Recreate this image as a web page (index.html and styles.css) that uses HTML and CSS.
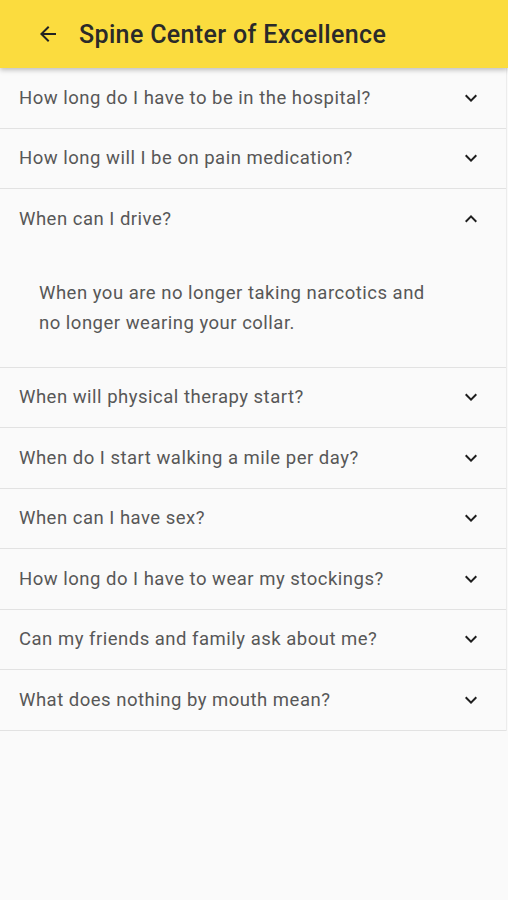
FILE: index.html
```html
<!DOCTYPE html>
<html lang="en">
<head>
  <meta charset="UTF-8" />
  <title>Spine Center of Excellence</title>
  <link rel="stylesheet" href="styles.css">
</head>
<body>
  <header class="appbar">
    <svg class="back" viewBox="0 0 24 24" width="24" height="24">
      <path d="M20 11H7.83l5.59-5.59L12 4l-8 8 8 8 1.41-1.41L7.83 13H20v-2z" fill="#222"/>
    </svg>
    <h1>Spine Center of Excellence</h1>
  </header>

  <div class="faq">
    <div class="item">
      <div class="question"><span>How long do I have to be in the hospital?</span><svg class="chev" viewBox="0 0 24 24"><path d="M7.41 8.59 12 13.17l4.59-4.58L18 10l-6 6-6-6z"/></svg></div>
    </div>
    <div class="item">
      <div class="question"><span>How long will I be on pain medication?</span><svg class="chev" viewBox="0 0 24 24"><path d="M7.41 8.59 12 13.17l4.59-4.58L18 10l-6 6-6-6z"/></svg></div>
    </div>
    <div class="item open">
      <div class="question"><span>When can I drive?</span><svg class="chev" viewBox="0 0 24 24"><path d="M7.41 15.41 12 10.83l4.59 4.58L18 14l-6-6-6 6z"/></svg></div>
      <p class="answer">When you are no longer taking narcotics and no longer wearing your collar.</p>
    </div>
    <div class="item">
      <div class="question"><span>When will physical therapy start?</span><svg class="chev" viewBox="0 0 24 24"><path d="M7.41 8.59 12 13.17l4.59-4.58L18 10l-6 6-6-6z"/></svg></div>
    </div>
    <div class="item">
      <div class="question"><span>When do I start walking a mile per day?</span><svg class="chev" viewBox="0 0 24 24"><path d="M7.41 8.59 12 13.17l4.59-4.58L18 10l-6 6-6-6z"/></svg></div>
    </div>
    <div class="item">
      <div class="question"><span>When can I have sex?</span><svg class="chev" viewBox="0 0 24 24"><path d="M7.41 8.59 12 13.17l4.59-4.58L18 10l-6 6-6-6z"/></svg></div>
    </div>
    <div class="item">
      <div class="question"><span>How long do I have to wear my stockings?</span><svg class="chev" viewBox="0 0 24 24"><path d="M7.41 8.59 12 13.17l4.59-4.58L18 10l-6 6-6-6z"/></svg></div>
    </div>
    <div class="item">
      <div class="question"><span>Can my friends and family ask about me?</span><svg class="chev" viewBox="0 0 24 24"><path d="M7.41 8.59 12 13.17l4.59-4.58L18 10l-6 6-6-6z"/></svg></div>
    </div>
    <div class="item">
      <div class="question"><span>What does nothing by mouth mean?</span><svg class="chev" viewBox="0 0 24 24"><path d="M7.41 8.59 12 13.17l4.59-4.58L18 10l-6 6-6-6z"/></svg></div>
    </div>
  </div>
</body>
</html>
```

FILE: styles.css
```css
body {
  margin: 0;
  background: #fafafa;
  font-family: Roboto, "Liberation Sans", sans-serif;
  height: 900px;
  overflow: hidden;
}
.appbar {
  height: 68px;
  background: #fbdc3e;
  display: flex;
  align-items: center;
  padding-left: 36px;
  box-shadow: 0 2px 5px rgba(0, 0, 0, 0.25);
  position: relative;
  z-index: 1;
}
.back {
  width: 24px;
  height: 24px;
  margin-right: 19px;
}
.appbar h1 {
  margin: 0;
  font-size: 25px;
  font-weight: 500;
  letter-spacing: 0.35px;
  color: #2a2a2a;
}
.faq {
  width: 506px;
  border-right: 1px solid #ececec;
}
.item {
  border-bottom: 1px solid #e2e2e2;
}
.question {
  height: 59.5px;
  display: flex;
  align-items: center;
  justify-content: space-between;
  padding: 0 23px 0 19px;
  font-size: 18.5px;
  letter-spacing: 0.5px;
  color: #575757;
}
.chev {
  width: 24px;
  height: 24px;
  fill: #1e1e1e;
}
.answer {
  margin: 0;
  padding: 29px 72px 29px 39px;
  font-size: 18.5px;
  letter-spacing: 0.5px;
  line-height: 30px;
  color: #575757;
}
```
